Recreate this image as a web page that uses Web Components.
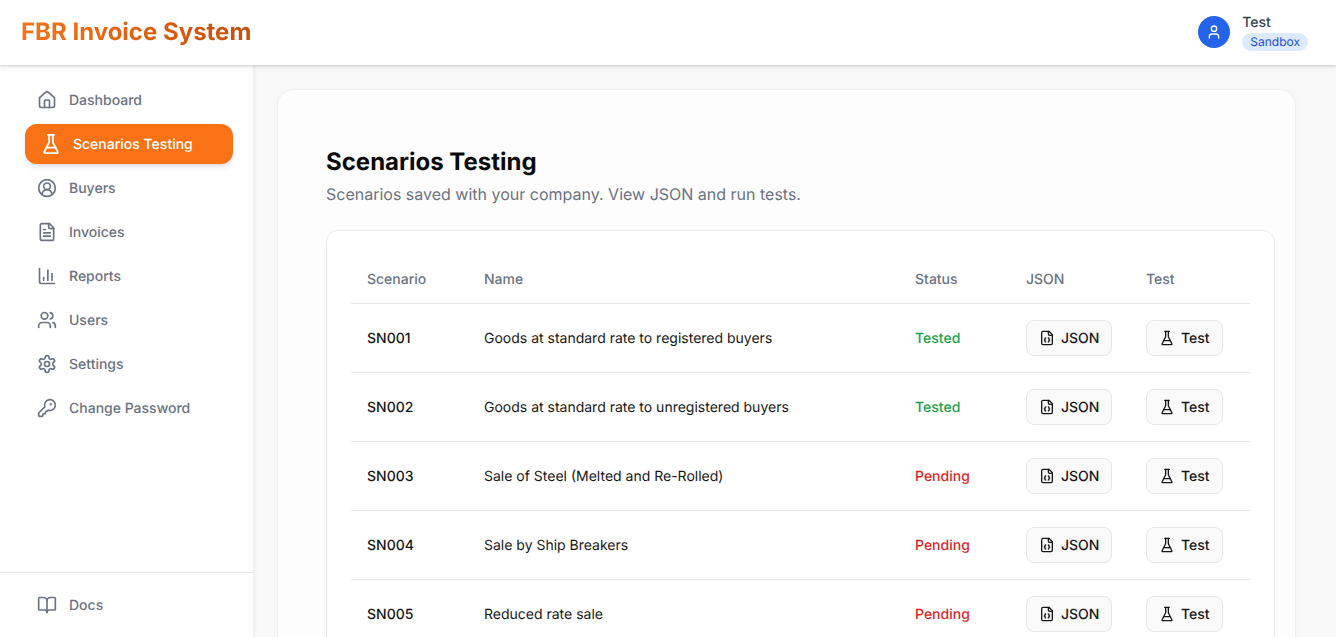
<!DOCTYPE html>
<html lang="en"><head><meta charset="utf-8"><title>FBR Invoice System</title>
<style>
html,body{margin:0;height:100%;overflow:hidden;background:#f9f9f9;font-family:Inter,"Liberation Sans",sans-serif;text-rendering:geometricPrecision}
</style></head><body>
<app-shell>
  <app-header slot="header"></app-header>
  <side-nav slot="nav"></side-nav>
  <page-panel title-text="Scenarios Testing" sub="Scenarios saved with your company. View JSON and run tests.">
    <scenario-table>
      <scenario-row code="SN001" name="Goods at standard rate to registered buyers" status="Tested"></scenario-row>
      <scenario-row code="SN002" name="Goods at standard rate to unregistered buyers" status="Tested"></scenario-row>
      <scenario-row code="SN003" name="Sale of Steel (Melted and Re-Rolled)" status="Pending"></scenario-row>
      <scenario-row code="SN004" name="Sale by Ship Breakers" status="Pending"></scenario-row>
      <scenario-row code="SN005" name="Reduced rate sale" status="Pending"></scenario-row>
    </scenario-table>
  </page-panel>
</app-shell>
<script>
const P={
house:'<path d="M15 21v-8a1 1 0 0 0-1-1h-4a1 1 0 0 0-1 1v8"/><path d="M3 10a2 2 0 0 1 .709-1.528l7-5.999a2 2 0 0 1 2.582 0l7 5.999A2 2 0 0 1 21 10v9a2 2 0 0 1-2 2H5a2 2 0 0 1-2-2z"/>',
flask:'<path d="M10 2v7.527a2 2 0 0 1-.211.896L4.72 20.55a1 1 0 0 0 .9 1.45h12.76a1 1 0 0 0 .9-1.45l-5.069-10.127A2 2 0 0 1 14 9.527V2"/><path d="M8.5 2h7"/><path d="M7 16h10"/>',
buyer:'<path d="M18 20a6 6 0 0 0-12 0"/><circle cx="12" cy="10" r="4"/><circle cx="12" cy="12" r="10"/>',
file:'<path d="M15 2H6a2 2 0 0 0-2 2v16a2 2 0 0 0 2 2h12a2 2 0 0 0 2-2V7Z"/><path d="M14 2v4a2 2 0 0 0 2 2h4"/><path d="M10 9H8"/><path d="M16 13H8"/><path d="M16 17H8"/>',
chart:'<path d="M3 3v16a2 2 0 0 0 2 2h16"/><path d="M18 17V9"/><path d="M13 17V5"/><path d="M8 17v-3"/>',
users:'<path d="M16 21v-2a4 4 0 0 0-4-4H6a4 4 0 0 0-4 4v2"/><circle cx="9" cy="7" r="4"/><path d="M22 21v-2a4 4 0 0 0-3-3.87"/><path d="M16 3.13a4 4 0 0 1 0 7.75"/>',
gear:'<path d="M12.22 2h-.44a2 2 0 0 0-2 2v.18a2 2 0 0 1-1 1.73l-.43.25a2 2 0 0 1-2 0l-.15-.08a2 2 0 0 0-2.73.73l-.22.38a2 2 0 0 0 .73 2.73l.15.1a2 2 0 0 1 1 1.72v.51a2 2 0 0 1-1 1.74l-.15.09a2 2 0 0 0-.73 2.73l.22.38a2 2 0 0 0 2.73.73l.15-.08a2 2 0 0 1 2 0l.43.25a2 2 0 0 1 1 1.73V20a2 2 0 0 0 2 2h.44a2 2 0 0 0 2-2v-.18a2 2 0 0 1 1-1.73l.43-.25a2 2 0 0 1 2 0l.15.08a2 2 0 0 0 2.73-.73l.22-.39a2 2 0 0 0-.73-2.73l-.15-.08a2 2 0 0 1-1-1.74v-.5a2 2 0 0 1 1-1.74l.15-.09a2 2 0 0 0 .73-2.73l-.22-.38a2 2 0 0 0-2.73-.73l-.15.08a2 2 0 0 1-2 0l-.43-.25a2 2 0 0 1-1-1.73V4a2 2 0 0 0-2-2z"/><circle cx="12" cy="12" r="3"/>',
key:'<path d="M2.586 17.414A2 2 0 0 0 2 18.828V21a1 1 0 0 0 1 1h3a1 1 0 0 0 1-1v-1a1 1 0 0 1 1-1h1a1 1 0 0 0 1-1v-1a1 1 0 0 1 1-1h.172a2 2 0 0 0 1.414-.586l.814-.814a6.5 6.5 0 1 0-4-4z"/><circle cx="16.5" cy="7.5" r=".5" fill="currentColor"/>',
book:'<path d="M12 7v14"/><path d="M3 18a1 1 0 0 1-1-1V4a1 1 0 0 1 1-1h5a4 4 0 0 1 4 4 4 4 0 0 1 4-4h5a1 1 0 0 1 1 1v13a1 1 0 0 1-1 1h-6a3 3 0 0 0-3 3 3 3 0 0 0-3-3z"/>',
json:'<path d="M15 2H6a2 2 0 0 0-2 2v16a2 2 0 0 0 2 2h12a2 2 0 0 0 2-2V7Z"/><path d="M14 2v4a2 2 0 0 0 2 2h4"/><path d="M10 12a1 1 0 0 0-1 1v1a1 1 0 0 1-1 1 1 1 0 0 1 1 1v1a1 1 0 0 0 1 1"/><path d="M14 18a1 1 0 0 0 1-1v-1a1 1 0 0 1 1-1 1 1 0 0 1-1-1v-1a1 1 0 0 0-1-1"/>',
user:'<path d="M19 21v-2a4 4 0 0 0-4-4H9a4 4 0 0 0-4 4v2"/><circle cx="12" cy="7" r="4"/>'
};
const icon=(n,s)=>`<svg width="${s}" height="${s}" viewBox="0 0 24 24" fill="none" stroke="currentColor" stroke-width="2" stroke-linecap="round" stroke-linejoin="round" style="display:block;flex:none">${P[n]}</svg>`;
class Base extends HTMLElement{
  connectedCallback(){ if(!this.shadowRoot){this.attachShadow({mode:'open'}).innerHTML=this.render();} }
}
customElements.define('app-shell',class extends Base{render(){return `<style>
:host{display:flex;flex-direction:column;height:100vh;overflow:hidden}
.body{flex:1;display:flex;min-height:0}
main{flex:1;min-width:0;overflow:hidden;padding:24px 40px 24px 24px;box-sizing:border-box}
</style><slot name="header"></slot><div class="body"><slot name="nav"></slot><main><slot></slot></main></div>`}});
customElements.define('app-header',class extends Base{render(){return `<style>
:host{display:flex;align-items:center;justify-content:space-between;height:65px;flex:none;box-sizing:border-box;padding:0 28px 1px 21px;background:#fff;box-shadow:0 1px 2px rgba(0,0,0,.14),0 2px 6px rgba(0,0,0,.08);position:relative;z-index:2}
.logo{font-size:24px;line-height:32px;font-weight:700;background:linear-gradient(90deg,#f97316,#c2500f);-webkit-background-clip:text;background-clip:text;color:transparent}
.user{display:flex;align-items:center;gap:12px}
.av{width:32px;height:32px;border-radius:50%;background:#2563eb;color:#fff;display:flex;align-items:center;justify-content:center}
.n{font-size:14px;line-height:20px;font-weight:450;color:#374151;padding-top:1px;margin-bottom:-1px}
.b{display:block;font-size:12px;line-height:16px;font-weight:400;padding:1px 8px;border-radius:9999px;background:#dbeafe;color:#1d4ed8;margin-top:1px}
.t{margin-top:-1px}
</style><div class="logo">FBR Invoice System</div><div class="user"><div class="av">${icon('user',16)}</div><div class="t"><div class="n">Test</div><span class="b">Sandbox</span></div></div>`}});
customElements.define('nav-item',class extends Base{render(){const a=this.hasAttribute('active');return `<style>
:host{display:block}
.i{display:flex;align-items:center;gap:12px;height:40px;box-sizing:border-box;padding:0 12px;border-radius:12px;font-size:14px;line-height:20px;font-weight:450;color:#6b7280}
span{display:block;padding-top:2px}
.a{background:#f97316;color:#fff;font-weight:500;box-shadow:0 4px 6px -1px rgba(0,0,0,.1),0 2px 4px -2px rgba(0,0,0,.1);padding-left:15px;gap:11px}
</style><div class="i ${a?'a':''}">${icon(this.getAttribute('icon'),a?22:20)}<span>${this.getAttribute('label')}</span></div>`}});
customElements.define('side-nav',class extends Base{render(){
const items=[['house','Dashboard'],['flask','Scenarios Testing',1],['buyer','Buyers'],['file','Invoices'],['chart','Reports'],['users','Users'],['gear','Settings'],['key','Change Password']];
return `<style>
:host{display:flex;flex-direction:column;width:253px;flex:none;box-sizing:border-box;background:#fff;box-shadow:1px 0 4px rgba(0,0,0,.07);position:relative;z-index:1}
nav{flex:1;display:flex;flex-direction:column;gap:4px;padding:15px 20px 0 25px}
.f{border-top:1px solid #e5e7eb;padding:12px 20px 12px 25px;height:65px;box-sizing:border-box}
</style><nav>${items.map(i=>`<nav-item icon="${i[0]}" label="${i[1]}" ${i[2]?'active':''}></nav-item>`).join('')}</nav><div class="f"><nav-item icon="book" label="Docs"></nav-item></div>`}});
customElements.define('page-panel',class extends Base{render(){return `<style>
:host{display:block;background:#fdfdfd;border:1px solid #eeeff1;border-radius:16px;padding:56px 20px 48px 48px;box-shadow:0 2px 10px rgba(0,0,0,.03)}
h1{margin:0;font-size:24px;line-height:32px;font-weight:650;color:#0a0a0a}
p{margin:4px 0 24px;font-size:16px;line-height:24px;color:#6b7280}
</style><h1>${this.getAttribute('title-text')}</h1><p>${this.getAttribute('sub')}</p><slot></slot>`}});
customElements.define('scenario-table',class extends Base{render(){return `<style>
:host{display:block;border:1px solid #e9ebee;border-radius:12px;padding:24px;background:#fff}
.h{display:grid;grid-template-columns:117px 431px 111px 120px 120px;height:48px;align-items:center;border-bottom:1px solid #e5e7eb;font-size:14px;font-weight:450;color:#6b7280}
.h span{padding-left:16px}
</style><div class="h"><span>Scenario</span><span>Name</span><span>Status</span><span>JSON</span><span>Test</span></div><slot></slot>`}});
customElements.define('action-button',class extends Base{render(){return `<style>
:host{display:inline-flex}
button{display:flex;align-items:center;gap:6px;height:36px;box-sizing:border-box;padding:0 12px;border:1px solid #e5e7eb;border-radius:8px;background:#fafafa;color:#171717;font:450 14px/20px Inter,"Liberation Sans",sans-serif;text-rendering:geometricPrecision}
span{display:block;padding-top:2px}
</style><button>${icon(this.getAttribute('icon'),16)}<span>${this.getAttribute('label')}</span></button>`}});
customElements.define('scenario-row',class extends Base{render(){const s=this.getAttribute('status');return `<style>
:host{display:grid;grid-template-columns:117px 431px 111px 120px 120px;height:69px;box-sizing:border-box;align-items:center;border-bottom:1px solid #e5e7eb;font-size:14px;color:#171717}
div{padding-left:16px}
.c{font-weight:450}
.s{font-weight:450;color:${s==='Tested'?'#16a34a':'#dc2626'}}
</style><div class="c">${this.getAttribute('code')}</div><div>${this.getAttribute('name')}</div><div class="s">${s}</div><div><action-button icon="json" label="JSON"></action-button></div><div><action-button icon="flask" label="Test"></action-button></div>`}});
</script>
</body></html>
